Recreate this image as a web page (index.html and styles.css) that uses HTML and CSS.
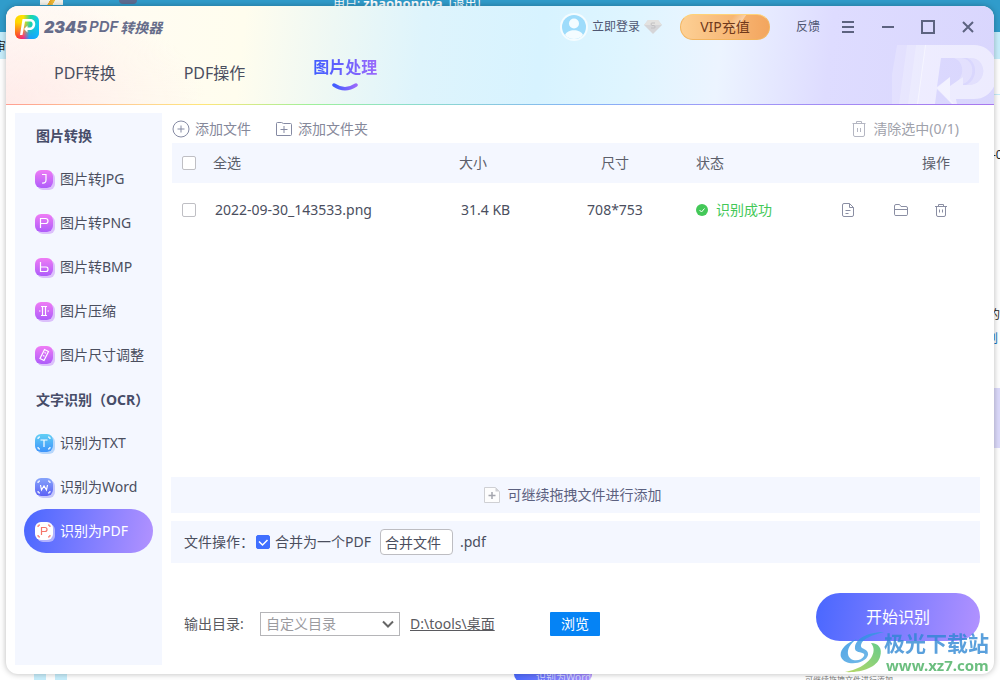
FILE: index.html
```html
<!DOCTYPE html>
<html lang="zh-CN">
<head>
<meta charset="utf-8">
<title>2345PDF转换器</title>
<link rel="stylesheet" href="styles.css">
</head>
<body>
<div class="desktop" aria-hidden="true">
  <div class="desk-band"></div>
  <div class="desk-strip"></div>
  <span class="desk-user">用户: <b>zhaohongya</b>&nbsp; [退出]</span>
  <span class="desk-pencil"></span>
  <span class="desk-gear"></span>
  <span class="desk-char">审</span>
  <div class="desk-side">
    <span class="side-date">-0</span>
    <span class="side-word">的</span>
    <span class="side-link">划</span>
    <span class="side-panel"></span>
  </div>
  <span class="desk-cyan"></span>
  <span class="desk-pill">识别为Word</span>
  <span class="desk-hint">可继续拖拽文件进行添加</span>
</div>

<div class="window">
  <header class="header">
    <svg class="header-mark" viewBox="0 0 108 60" aria-hidden="true">
      <g fill="#fff">
        <path opacity=".2" d="M5 1H34L26 60H-5Z"/>
        <path opacity=".2" d="M15 1H34L26 60H7Z"/>
        <path opacity=".2" d="M24 1H34L26 60H16Z"/>
        <path opacity=".52" fill-rule="evenodd" d="M33 1H82C113 1 113 55 82 55H64L65 60H60L45 45L43 60H25ZM49 14L45 43L58 33V42L71 33V41H76C96 41 96 14 78 14Z"/>
        <path opacity=".24" d="M62 14H68C84 14 84 36 71 40V33L62 40C73 34 73 18 62 14Z"/>
        <path opacity=".24" d="M75 14H78C96 14 96 41 76 41H74C86 36 86 18 75 14Z"/>
        <path opacity=".3" d="M45 44L58 33V55L62 60H60Z"/>
      </g>
    </svg>
    <div class="titlebar">
      <svg class="logo" viewBox="0 0 24 24" aria-hidden="true">
        <defs>
          <linearGradient id="lg-a" x1="0" x2="1"><stop offset="0" stop-color="#ffd400"/><stop offset=".35" stop-color="#ffe100"/><stop offset=".65" stop-color="#1fd8a0"/><stop offset="1" stop-color="#12c9f5"/></linearGradient>
          <linearGradient id="lg-b" x1="0" x2="1"><stop offset="0" stop-color="#ff2d1f"/><stop offset=".35" stop-color="#f0208f"/><stop offset=".6" stop-color="#1b9bff"/><stop offset="1" stop-color="#10b2ff"/></linearGradient>
          <linearGradient id="lg-m" x2="0" y2="1"><stop offset=".3" stop-color="#000"/><stop offset="1" stop-color="#fff"/></linearGradient>
          <mask id="lg-k"><rect width="24" height="24" fill="url(#lg-m)"/></mask>
        </defs>
        <rect width="24" height="24" rx="6" fill="url(#lg-a)"/>
        <rect width="24" height="24" rx="6" fill="url(#lg-b)" mask="url(#lg-k)"/>
        <path d="M7.500 4H15C22.500 4 21.500 15 15 15H12.500V17.500L9 14L12.500 10.500V12.500H15C18.500 12.500 18.500 6.500 15.500 6.500H10L7.500 20H5Z" fill="#fff"/>
      </svg>
      <h1 class="brand"><span class="brand-num">2345</span><span class="brand-pdf">PDF</span><span class="brand-cn">转换器</span></h1>
      <div class="account">
        <button class="login" type="button">
          <svg class="avatar" viewBox="0 0 28 28" aria-hidden="true">
            <circle cx="14" cy="14" r="14" fill="#f4fcff"/>
            <circle cx="14" cy="14" r="12" fill="#9edcfb"/>
            <circle cx="14" cy="10.500" r="5" fill="#f4fcff"/>
            <path d="M5 22C7 15.500 21 15.500 23 22A12 12 0 0 1 5 22Z" fill="#f4fcff"/>
          </svg>
          <span>立即登录</span>
          <svg class="gem" viewBox="0 0 18 14" aria-hidden="true">
            <path d="M4 0H14L18 5L9 14L0 5Z" fill="#d5d5d8"/><path d="M4 0H14L18 5H0Z" fill="#e3e2e0"/>
            <path d="M11 3H8Q7 3 7 4T8 5.500H10Q11 5.500 11 7T10 8H7" fill="none" stroke="#c1c0c2"/>
          </svg>
        </button>
        <button class="vip" type="button">VIP充值</button>
        <button class="feedback" type="button">反馈</button>
        <button class="win-btn" type="button" aria-label="菜单"><svg viewBox="0 0 14 14"><path d="M1 2H13M1 7H13M1 12H13"/></svg></button>
        <button class="win-btn" type="button" aria-label="最小化"><svg viewBox="0 0 14 14"><path d="M1 7H13"/></svg></button>
        <button class="win-btn" type="button" aria-label="最大化"><svg viewBox="0 0 14 14"><path d="M1 1H13V13H1Z"/></svg></button>
        <button class="win-btn" type="button" aria-label="关闭"><svg viewBox="0 0 14 14"><path d="M2 2L12 12M12 2L2 12"/></svg></button>
      </div>
    </div>
    <nav class="tabs">
      <a class="tab" href="#convert">PDF转换</a>
      <a class="tab" href="#operate">PDF操作</a>
      <a class="tab tab-active" href="#image"><span class="tab-text">图片处理</span>
        <svg class="smile" viewBox="0 0 26 8" aria-hidden="true"><defs><linearGradient id="sm"><stop stop-color="#3f5cff"/><stop offset="1" stop-color="#9a69fb"/></linearGradient></defs><path d="M2 2Q13 9.500 24 2" fill="none" stroke="url(#sm)" stroke-width="3.500" stroke-linecap="round"/></svg>
      </a>
    </nav>
  </header>

  <div class="content">
    <aside class="sidebar">
      <h2 class="side-title">图片转换</h2>
      <a class="side-item" href="#jpg"><svg class="tile tile-pink" viewBox="0 0 18 18"><path d="M7 4.500H11V10Q11 13.500 7 13"/></svg>图片转JPG</a>
      <a class="side-item" href="#png"><svg class="tile tile-pink" viewBox="0 0 18 18"><path d="M5.500 14V4.500H10.500Q13 4.500 13 7T10.500 9.500H5.500"/></svg>图片转PNG</a>
      <a class="side-item" href="#bmp"><svg class="tile tile-pink" viewBox="0 0 18 18"><path d="M5.500 4V13.500H11Q13 13.500 13 11.200T11 9H5.500"/></svg>图片转BMP</a>
      <a class="side-item" href="#compress"><svg class="tile tile-pink" viewBox="0 0 18 18"><path d="M6 4.500H12M6 13.500H12M7.500 4.500V13.500M10.500 4.500V13.500M4 9H5.500M12.500 9H14"/></svg>图片压缩</a>
      <a class="side-item" href="#resize"><svg class="tile tile-pink" viewBox="0 0 18 18"><path d="M9.500 3.500L13.500 5.500L9 14.500L5 12.500ZM9.500 6.500L11 7.200M8 9.500L9.500 10.200"/></svg>图片尺寸调整</a>
      <h2 class="side-title">文字识别（OCR）</h2>
      <a class="side-item" href="#txt"><svg class="tile tile-sky" viewBox="0 0 18 18"><path d="M5.500 6H12.500M9 6V13"/><path class="scan" d="M3 5Q3 3 5 3M13 3Q15 3 15 5M15 13Q15 15 13 15M5 15Q3 15 3 13"/></svg>识别为TXT</a>
      <a class="side-item" href="#word"><svg class="tile tile-blue" viewBox="0 0 18 18"><path d="M5.500 7L6.500 12L9 8L11.500 12L12.500 7"/><path class="scan" d="M3 5Q3 3 5 3M13 3Q15 3 15 5M15 13Q15 15 13 15M5 15Q3 15 3 13"/></svg>识别为Word</a>
      <a class="side-item side-active" href="#pdf"><svg class="tile tile-white" viewBox="0 0 18 18"><path d="M6.500 13V5.500H10Q12 5.500 12 7.500T10 9.500H6.500"/><path class="scan" d="M3 5Q3 3 5 3M13 3Q15 3 15 5M15 13Q15 15 13 15M5 15Q3 15 3 13"/></svg>识别为PDF</a>
    </aside>

    <main class="main">
      <div class="toolbar">
        <button class="tool" type="button"><svg class="tool-icon" viewBox="0 0 18 18"><circle cx="9" cy="9" r="8"/><path d="M5.500 9H12.500M9 5.500V12.500"/></svg>添加文件</button>
        <button class="tool" type="button"><svg class="tool-icon" viewBox="0 0 18 18"><path d="M1.500 15V3.500Q1.500 2.500 2.500 2.500H6.500L8.500 3.500H15.500Q16.500 3.500 16.500 4.500V14.500Q16.500 15.500 15.500 15.500H2Q1.500 15.500 1.500 15ZM5.500 9.500H12.500M9 6V13"/></svg>添加文件夹</button>
        <button class="tool tool-clear" type="button"><svg class="tool-icon" viewBox="0 0 18 18"><path d="M2.500 3.500H15.500M6.500 3.500V1.500H11.500V3.500M3.500 3.500V15Q3.500 16.500 5 16.500H13Q14.500 16.500 14.500 15V3.500M7.500 8V12M10.500 8V12"/></svg>清除选中(0/1)</button>
      </div>

      <div class="files">
        <table class="file-table">
          <colgroup><col class="c-check"><col class="c-name"><col class="c-size"><col class="c-dim"><col class="c-state"><col class="c-ops"></colgroup>
          <thead>
            <tr>
              <th><input class="check" type="checkbox" id="all"></th>
              <th><label for="all">全选</label></th>
              <th>大小</th>
              <th class="center">尺寸</th>
              <th>状态</th>
              <th class="right">操作</th>
            </tr>
          </thead>
          <tbody>
            <tr>
              <td><input class="check" type="checkbox" id="f1"></td>
              <td><label for="f1">2022-09-30_143533.png</label></td>
              <td>31.4 KB</td>
              <td class="center">708*753</td>
              <td><span class="ok"><svg class="ok-icon" viewBox="0 0 12 12" aria-hidden="true"><circle cx="6" cy="6" r="6" fill="#43c858"/><path d="M3.500 6L5.500 8L8.500 4.500" fill="none" stroke="#fff"/></svg>识别成功</span></td>
              <td>
                <div class="ops">
                  <button class="op op-first" type="button" aria-label="打开文件"><svg viewBox="0 0 14 14"><path d="M1.500 2Q1.500 .500 3 .500H8.500L12.500 4.500V12Q12.500 13.500 11 13.500H3Q1.500 13.500 1.500 12ZM8.500 .500V4.500H12.500M4.500 7.500H9.500M4.500 10.500H7.500"/></svg></button>
                  <button class="op" type="button" aria-label="打开文件夹"><svg viewBox="0 0 14 14"><path d="M.500 3Q.500 1.500 2 1.500H5.500L7 3.500H12Q13.500 3.500 13.500 5V11.500Q13.500 12.500 12 12.500H2Q.500 12.500 .500 11.500ZM.500 6.500H13.500"/></svg></button>
                  <button class="op" type="button" aria-label="删除"><svg viewBox="0 0 14 14"><path d="M1 3.500H13M4.500 3.500V1.500H9.500V3.500M2.500 3.500V12Q2.500 13.500 4 13.500H10Q11.500 13.500 11.500 12V3.500M5.500 6.500V9.500M8.500 6.500V9.500"/></svg></button>
                </div>
              </td>
            </tr>
          </tbody>
        </table>
      </div>

      <div class="drop">
        <svg class="drop-icon" viewBox="0 0 16 16" aria-hidden="true"><path d="M.500 .500H11.500L15.500 4.500V15.500H.500Z" fill="#fdfdfd" stroke="#cfd0d4"/><path d="M11.500 .500V4.500H15.500Z" fill="#cfd0d4"/><path d="M4.500 8.500H11.500M8 5V12" stroke="#a3a5ad" stroke-width="1.500"/></svg>
        可继续拖拽文件进行添加
      </div>

      <div class="merge">
        <span>文件操作：</span>
        <span class="check-wrap">
          <input class="check check-blue" type="checkbox" id="merge" checked>
          <svg class="check-mark" viewBox="0 0 14 14" aria-hidden="true"><path d="M3 6.500L6.500 10L11.500 5"/></svg>
        </span>
        <label for="merge">合并为一个PDF</label>
        <input class="merge-name" type="text" value="合并文件" aria-label="文件名">
        <span>.pdf</span>
      </div>

      <footer class="footer">
        <div class="output">
          <label class="output-label" for="dir">输出目录:</label>
          <span class="select-wrap">
            <select class="select" id="dir"><option>自定义目录</option></select>
            <svg class="caret" viewBox="0 0 12 8" aria-hidden="true"><path d="M1 1.500L6 6.500L11 1.500"/></svg>
          </span>
          <a class="path" href="#path">D:\tools\桌面</a>
          <button class="browse" type="button">浏览</button>
        </div>
        <button class="start" type="button">开始识别</button>
      </footer>
    </main>
  </div>
</div>

<div class="watermark">
  <svg class="wm-logo" viewBox="0 0 44 42" aria-hidden="true">
    <defs><linearGradient id="wb" x2="1" y2="1"><stop stop-color="#1787dd"/><stop offset="1" stop-color="#5aaee4"/></linearGradient><linearGradient id="wg" x1="1" x2="0" y2="1"><stop stop-color="#3dbd6a"/><stop offset="1" stop-color="#a6cf3c"/></linearGradient></defs>
    <path d="M44 1C28 1 14 8 15 18C16 23 26 20 24 25C21 31 9 31 8 23C7 17 12 11 17 8C5 12-1 20 1 26C5 36 26 33 28 24C29 17 20 19 21 14C22 8 32 4 44 1Z" fill="url(#wb)"/>
    <path d="M31 12C35 17 34 22 31 27C26 34 16 39 5 41C20 42 37 37 40 26C43 17 38 12 31 12Z" fill="url(#wg)"/>
  </svg>
  <div class="wm-text"><span class="wm-cn">极光下载站</span><span class="wm-url">www.xz7.com</span></div>
</div>
</body>
</html>
```
FILE: styles.css
```css
* { box-sizing: border-box; }

body {
  margin: 0;
  height: 100vh;
  padding: 6px;
  display: flex;
  position: relative;
  overflow: hidden;
  background: #fff;
  color: #4a4e5e;
  font: 14px/20px "Noto Sans", "Noto Sans CJK SC", sans-serif;
}

button, input, select { font: inherit; color: inherit; }
button { border: 0; padding: 0; background: none; cursor: pointer; }
a { color: inherit; text-decoration: none; }
svg { display: block; flex: none; }
h1, h2 { margin: 0; }

/* Desktop visible around the window */
.desktop { position: absolute; inset: 0; overflow: hidden; color: #222; }
.desktop > * { position: absolute; }
.desk-band { left: 0; right: 0; top: 0; height: 32px; background: #309ccb; }
.desk-strip { left: 0; right: 0; top: 32px; height: 27px; background: #c7eefc; }
.desk-user { left: 333px; top: -7px; color: #fff; font-size: 12px; line-height: 20px; }
.desk-user b { font-size: 13px; }
.desk-pencil { left: 40px; top: 0; width: 23px; height: 5px; background: linear-gradient(120deg, #f5f2ea 38%, #e8a41f 40%, #f0c040 58%, #f5f2ea 60%); }
.desk-gear { left: 119px; top: 0; width: 18px; height: 4px; background: #5d6c91; border-radius: 0 0 8px 8px; }
.desk-char { left: -6px; top: 38px; font-size: 12px; line-height: 18px; }
.desk-side { right: 0; top: 94px; bottom: 0; width: 10px; border-top: 1px solid #c7eefc; }
.desk-side > * { position: absolute; }
.side-date { left: 2px; top: 50px; font-size: 12px; line-height: 20px; }
.side-word { left: -2px; top: 210px; font-size: 12px; line-height: 20px; }
.side-link { left: -4px; top: 234px; font-size: 12px; line-height: 20px; color: #0878c4; }
.side-panel { left: 0; right: 0; top: 293px; height: 60px; background: #dcdafb; }
.desk-cyan { left: 34px; top: 674px; bottom: 0; width: 33px; border-left: 12px solid #c7eefc; border-right: 12px solid #c7eefc; }
.desk-pill { left: 514px; top: 660px; width: 78px; height: 22px; padding-left: 22px; border-radius: 8px; background: linear-gradient(90deg, #4c6bff, #a88cff); color: #d8dcff; font-size: 10px; line-height: 34px; }
.desk-hint { left: 805px; top: 672px; font-size: 8px; line-height: 16px; color: #777; }

/* Window */
.window {
  flex: 1;
  min-width: 0;
  position: relative;
  display: flex;
  flex-direction: column;
  border-radius: 12px;
  overflow: hidden;
  background: #fff;
  box-shadow: 0 0 6px rgba(0, 0, 0, .28);
}

.header {
  position: relative;
  height: 99px;
  border-bottom: 1px solid;
  border-image: linear-gradient(90deg, #ff9f92, #ffd591 14%, #ffe67a 20%, #9ff09a 31%, #8ee0c8 40%, #84b4f5 58%, #9f9af8 72%, #a877ee) 1;
  background:
    radial-gradient(ellipse 200px 110px at 0 100%, rgba(255, 232, 230, .8), rgba(255, 240, 236, 0)),
    linear-gradient(96deg, #fffaf7 0, #fffcf2 12%, #fffdee 24%, #eef8f4 33%, #def4fc 42%, #d7f3ff 54%, #dff5ff 63%, #ecf4ff 72%, #dedcff 83%, #d9d6fd 100%);
}
.header-mark { position: absolute; right: -6px; bottom: 0; width: 108px; height: 60px; }

.titlebar { position: relative; display: flex; align-items: center; height: 42px; padding: 0 19px 0 9px; }
.logo { width: 24px; height: 24px; }
.brand { display: flex; align-items: center; gap: 2px; margin-left: 5px; color: #666c8a; line-height: 20px; font-style: italic; }
.brand-num { font: italic 900 16px/20px Inter, sans-serif; }
.brand-pdf { font: italic 600 15px/20px Inter, sans-serif; }
.brand-cn { font: italic 700 14px/20px "Noto Sans CJK SC", sans-serif; }
.account { display: flex; align-items: center; margin-left: auto; color: #4f5672; }
.login { display: flex; align-items: center; font-size: 12px; gap: 4px; }
.avatar { width: 28px; height: 28px; }
.gem { width: 18px; height: 14px; }
.vip {
  width: 90px;
  height: 26px;
  margin-left: 18px;
  border-radius: 13px;
  border: 1px solid #f3b45e;
  border-top-color: #ffd277;
  background: linear-gradient(125deg, transparent 54%, rgba(255, 255, 255, .4) 66%, transparent 67%) 0 0 / 100% 60% no-repeat, linear-gradient(90deg, #fdd095, #f3a55e);
  color: #70391b;
  line-height: 24px;
}
.feedback { margin: 0 21px 0 26px; font-size: 12px; }
.win-btn { width: 14px; height: 14px; margin-left: 26px; }
.feedback + .win-btn { margin-left: 0; }
.win-btn svg { width: 14px; height: 14px; fill: none; stroke: #5d6380; stroke-width: 2; }

.tabs { position: relative; display: flex; gap: 68px; padding-left: 48px; font-size: 16px; line-height: 24px; }
.tab { padding-top: 13px; color: #4a4e60; }
.tab-active { padding-top: 7px; display: flex; flex-direction: column; align-items: center; font-weight: 700; }
.tab-text { background: linear-gradient(90deg, #3f5cff, #9a69fb); background-clip: text; color: transparent; }
.smile { width: 26px; height: 8px; margin-top: 4px; }

.content { flex: 1; min-height: 0; display: flex; gap: 9px; padding: 8px 14px 9px 9px; }

/* Sidebar */
.sidebar { flex: none; width: 147px; padding: 0 9px; background: #f4f7ff; }
.side-title { height: 44px; padding-left: 12px; font-size: 14px; line-height: 46px; white-space: nowrap; color: #474d69; }
.side-item { display: flex; align-items: center; gap: 7px; height: 44px; padding-left: 11px; border-radius: 22px; color: #4a4e5e; white-space: nowrap; }
.side-active { background: linear-gradient(100deg, #4967ff, #b292ff); color: #fff; }
.tile { width: 18px; height: 18px; border-radius: 6px; fill: none; stroke: #fff; stroke-width: 1.2; }
.tile-pink { background: linear-gradient(#ef7cf5, #ae5cfa); box-shadow: 2px 2px 0 #dcc0fb; }
.tile-sky { background: linear-gradient(#62cff5, #3e94fb); box-shadow: 2px 2px 0 #b6d6fb; }
.tile-blue { background: linear-gradient(#86a4fb, #5c62f5); box-shadow: 2px 2px 0 #c4c6fb; }
.tile-white { background: #fff; stroke: #f5766b; box-shadow: 2px 2px 0 #b1b2ff; }
.scan { stroke-width: 1.5; opacity: .8; }

/* Main pane */
.main { flex: 1; min-width: 0; display: flex; flex-direction: column; }
.toolbar { display: flex; align-items: center; gap: 24px; height: 30px; padding: 2px 21px 0 1px; color: #85889a; }
.tool { display: flex; align-items: center; gap: 5px; }
.tool-icon { width: 18px; height: 18px; fill: none; stroke: #858aa3; }
.tool-clear { margin-left: auto; color: #a0a2ab; }
.tool-clear .tool-icon { stroke: #b4b6c2; }

.files { flex: 1; padding: 0 1px; }
.file-table { width: 100%; border-collapse: collapse; table-layout: fixed; }
.c-check { width: 41px; }
.c-size { width: 75px; }
.c-dim { width: 162px; }
.c-state { width: 140px; }
.c-ops { width: 143px; }
.file-table th, .file-table td { padding: 0; text-align: left; font-weight: 400; white-space: nowrap; }
.file-table th { height: 40px; background: #f4f7ff; color: #5c5f6b; }
.file-table td { height: 54px; }
.file-table td:nth-child(2), .file-table td:nth-child(3) { padding-left: 2px; }
.file-table .center { text-align: center; }
.file-table .right { text-align: right; padding-right: 29px; }

.check { appearance: none; display: block; flex: none; width: 14px; height: 14px; margin: 0 0 0 10px; border: 1px solid #bfbfc4; border-radius: 2px; background: #fff; }
.check-wrap { position: relative; }
.check-blue { margin: 0; border-color: #3f6fff; background: #3f6fff; }
.check-mark { position: absolute; inset: 0; width: 14px; height: 14px; fill: none; stroke: #fff; stroke-width: 1.5; pointer-events: none; visibility: hidden; }
.check-blue:checked + .check-mark { visibility: visible; }

.ok { display: flex; align-items: center; gap: 8px; color: #43c858; }
.ok-icon { width: 12px; height: 12px; }
.ops { display: flex; justify-content: flex-end; gap: 26px; padding-right: 31px; }
.op-first { margin-right: 13px; }
.op svg { width: 14px; height: 14px; fill: none; stroke: #8a8ea3; }

.drop { display: flex; align-items: center; justify-content: center; gap: 8px; height: 36px; padding-right: 6px; background: #f4f7ff; color: #5c6180; }
.drop-icon { width: 16px; height: 16px; }

.merge { display: flex; align-items: center; height: 42px; margin-top: 8px; padding-left: 13px; background: #f4f7ff; white-space: nowrap; }
.merge label { margin: 0 9px 0 5px; }
.merge > span:first-child { width: 72px; }
.merge-name { width: 73px; height: 26px; margin-right: 7px; padding: 0 4px; border: 1px solid #bdbdc2; border-radius: 4px; background: #fff; }

.footer { display: flex; align-items: flex-end; justify-content: space-between; margin-top: 30px; padding-bottom: 24px; }
.output { display: flex; align-items: center; padding: 0 0 5px 13px; white-space: nowrap; color: #5a5a5f; }
.output-label { width: 76px; }
.select-wrap { position: relative; width: 140px; height: 24px; }
.select { appearance: none; display: block; width: 100%; height: 24px; padding: 0 5px; border: 1px solid #b5b5b8; border-radius: 0; background: #fff; color: #9b9b9f; }
.caret { position: absolute; right: 6px; top: 8px; width: 12px; height: 8px; fill: none; stroke: #666; stroke-width: 2; pointer-events: none; }
.path { width: 150px; padding-left: 10px; text-decoration: underline; }
.browse { width: 50px; height: 24px; border-radius: 1px; background: #0583f5; color: #fff; line-height: 24px; }
.start { width: 164px; height: 48px; border-radius: 24px; background: linear-gradient(100deg, #4967ff, #b292ff); color: #fff; font-size: 16px; }

/* Site stamp over the corner */
.watermark { position: absolute; right: 11px; bottom: 6px; display: flex; align-items: center; opacity: .78; pointer-events: none; white-space: nowrap; }
.wm-logo { width: 44px; height: 42px; }
.wm-text { display: flex; flex-direction: column; font-weight: 700; }
.wm-cn { color: #2c86d3; font-size: 21px; line-height: 26px; }
.wm-url { padding-left: 2px; color: #43ad5c; font-size: 15px; line-height: 18px; }
```
